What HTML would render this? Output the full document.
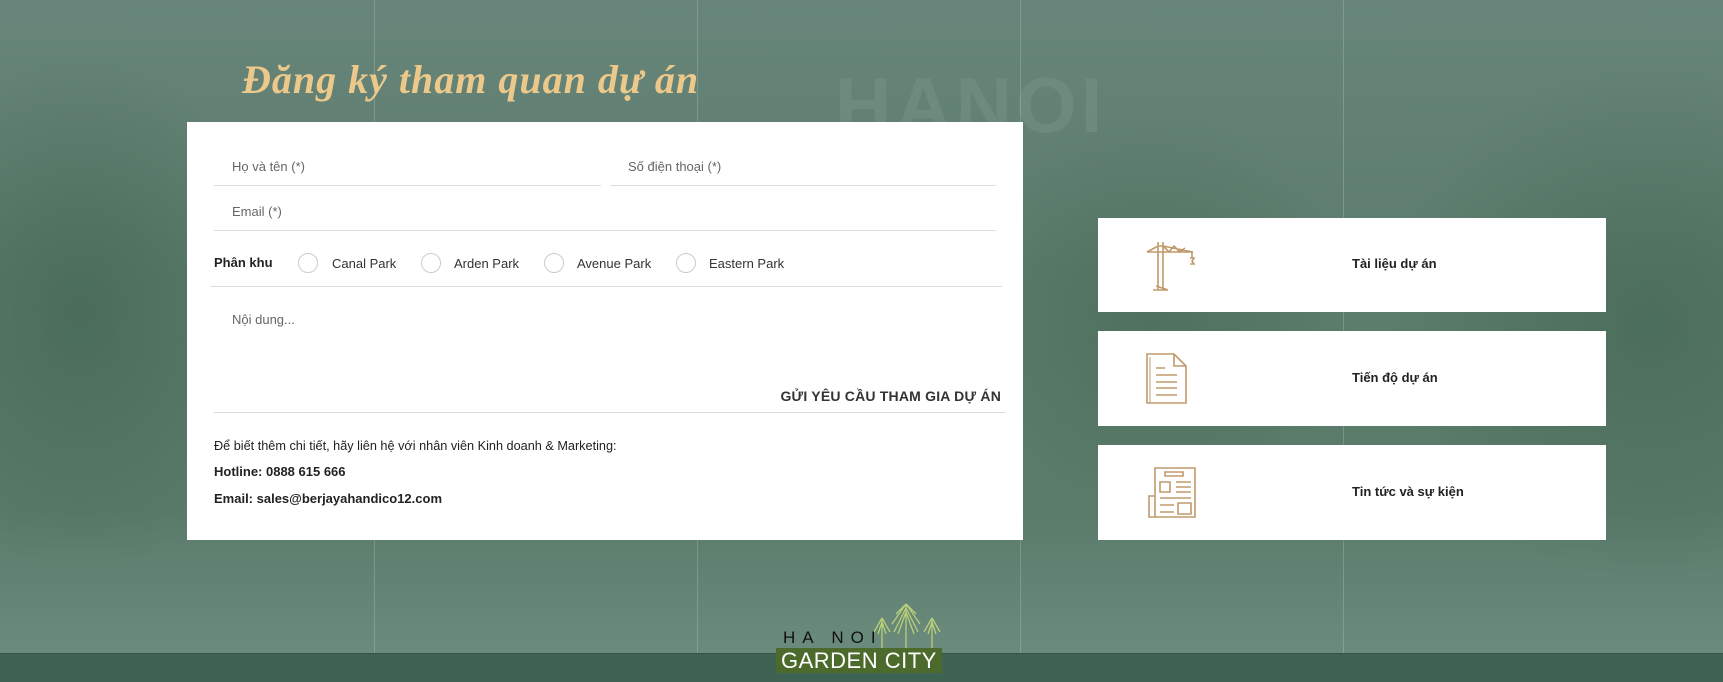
<!DOCTYPE html>
<html><head><meta charset="utf-8"><style>
*{margin:0;padding:0;box-sizing:border-box}
body{width:1723px;height:682px;overflow:hidden;position:relative;font-family:"Liberation Sans",Arial,sans-serif;background:linear-gradient(180deg,#67857a 0%,#5c7c6c 40%,#5a7a6a 75%,#6a8a7c 95%);}
.trees{position:absolute;left:0;top:60px;width:1723px;height:560px;background:radial-gradient(ellipse 200px 260px at 80px 250px,rgba(60,95,75,.55),transparent),radial-gradient(ellipse 260px 260px at 1650px 260px,rgba(60,95,75,.5),transparent),radial-gradient(ellipse 200px 200px at 1150px 250px,rgba(60,95,75,.4),transparent)}
.vl{position:absolute;top:0;height:653px;width:1px;background:rgba(255,255,255,.18)}
.band{position:absolute;left:0;top:653px;width:1723px;height:29px;background:#3f6353;border-top:1px solid #35544a}
h1{position:absolute;left:242px;top:56px;font-family:"Liberation Serif",serif;font-style:italic;font-weight:bold;font-size:40px;color:#ecc98a;letter-spacing:1px}
.hanoi{position:absolute;left:835px;top:60px;font-size:78px;font-weight:bold;color:rgba(255,255,255,.07);letter-spacing:4px}
.form{position:absolute;left:187px;top:122px;width:836px;height:418px;background:#fff}
.t{position:absolute;font-size:13px;color:#666}
.ln{position:absolute;height:1px;background:#ddd}
.r{position:absolute;width:20px;height:20px;border:1px solid #ccc;border-radius:50%}
.lab{position:absolute;font-size:13px;color:#333}
.card{position:absolute;left:1098px;width:508px;background:#fff}
.card span{position:absolute;left:254px;font-size:13px;font-weight:bold;color:#222}
.card svg{position:absolute;left:48px}
</style></head><body>
<div class="trees"></div>
<div class="vl" style="left:374px"></div><div class="vl" style="left:697px"></div><div class="vl" style="left:1020px"></div><div class="vl" style="left:1343px"></div>
<div class="hanoi">HANOI</div>
<h1>Đăng ký tham quan dự án</h1>
<div class="form">
 <div class="t" style="left:45px;top:37px">Họ và tên (*)</div>
 <div class="t" style="left:441px;top:37px">Số điện thoại (*)</div>
 <div class="ln" style="left:27px;top:63px;width:387px"></div>
 <div class="ln" style="left:423px;top:63px;width:386px"></div>
 <div class="t" style="left:45px;top:82px">Email (*)</div>
 <div class="ln" style="left:27px;top:108px;width:782px"></div>
 <div class="lab" style="left:27px;top:133px;font-weight:bold;color:#222">Phân khu</div>
 <div class="r" style="left:111px;top:131px"></div><div class="lab" style="left:145px;top:134px">Canal Park</div>
 <div class="r" style="left:234px;top:131px"></div><div class="lab" style="left:267px;top:134px">Arden Park</div>
 <div class="r" style="left:357px;top:131px"></div><div class="lab" style="left:390px;top:134px">Avenue Park</div>
 <div class="r" style="left:489px;top:131px"></div><div class="lab" style="left:522px;top:134px">Eastern Park</div>
 <div class="ln" style="left:23px;top:164px;width:792px"></div>
 <div class="t" style="left:45px;top:190px">Nội dung...</div>
 <div class="lab" style="right:22px;top:266px;font-weight:bold;font-size:14px;letter-spacing:.2px">GỬI YÊU CẦU THAM GIA DỰ ÁN</div>
 <div class="ln" style="left:27px;top:290px;width:792px"></div>
 <div class="lab" style="left:27px;top:317px;color:#222;font-size:12.7px">Để biết thêm chi tiết, hãy liên hệ với nhân viên Kinh doanh &amp; Marketing:</div>
 <div class="lab" style="left:27px;top:342px;font-weight:bold;color:#222">Hotline: 0888 615 666</div>
 <div class="lab" style="left:27px;top:369px;font-weight:bold;color:#222">Email: sales@berjayahandico12.com</div>
</div>
<div class="card" style="top:218px;height:94px">
 <svg style="top:22px" width="50" height="52" viewBox="0 0 50 52" fill="none" stroke="#c09a6b" stroke-width="1.6"><path d="M12 2v48M17 2v48M7 50h15M10 46l12 4M1 12h46M1 12l11-6h5l30 6M17 6l6 6 5-6 6 6 5-4M46 12v6M44 18h4l-2 3 2 3h-4"/></svg>
 <span style="top:38px">Tài liệu dự án</span>
</div>
<div class="card" style="top:331px;height:95px">
 <svg style="top:22px" width="44" height="52" viewBox="0 0 44 52" fill="none" stroke="#c09a6b" stroke-width="1.6"><path d="M1 1h27l12 12v37H1z M28 1v12h12 M10 15h9 M10 22h21 M10 29h21 M10 35h21 M10 42h21"/><path d="M4 4v46" stroke-width="1"/></svg>
 <span style="top:39px">Tiến độ dự án</span>
</div>
<div class="card" style="top:445px;height:95px">
 <svg style="top:22px" width="52" height="54" viewBox="0 0 52 54" fill="none" stroke="#c09a6b" stroke-width="1.6"><path d="M9 1h40v49H3V29h6z M9 1v49 M19 5h18v4H19z M14 15h10v10H14z M30 15h15 M30 20h15 M30 25h15 M14 31h31 M14 38h14 M14 45h14 M32 36h13v11H32z"/></svg>
 <span style="top:39px">Tin tức và sự kiện</span>
</div>
<div class="band"></div>
<svg style="position:absolute;left:866px;top:600px" width="80" height="52" viewBox="0 0 80 52" fill="none" stroke="#b9cf7a" stroke-width="1.3"><path d="M40 4v48M40 4L26 24M40 4l14 20M40 8L28 32M40 8l12 24M40 12l-8 22M40 12l8 22M40 4L30 14M40 4l10 10M16 18v34M16 18L8 32M16 18l8 14M16 22l-4 12M16 22l4 12M66 18v34M66 18l-8 14M66 18l8 14M66 22l-4 12M66 22l4 12"/></svg>
<div style="position:absolute;left:783px;top:628px;font-size:17px;letter-spacing:7px;color:#111">HA NOI</div>
<div style="position:absolute;left:776px;top:648px;width:166px;height:25px;background:#4b6a2c;color:#fff;font-size:22px;line-height:25px;padding-left:5px;letter-spacing:.5px">GARDEN CITY</div>
</body></html>
